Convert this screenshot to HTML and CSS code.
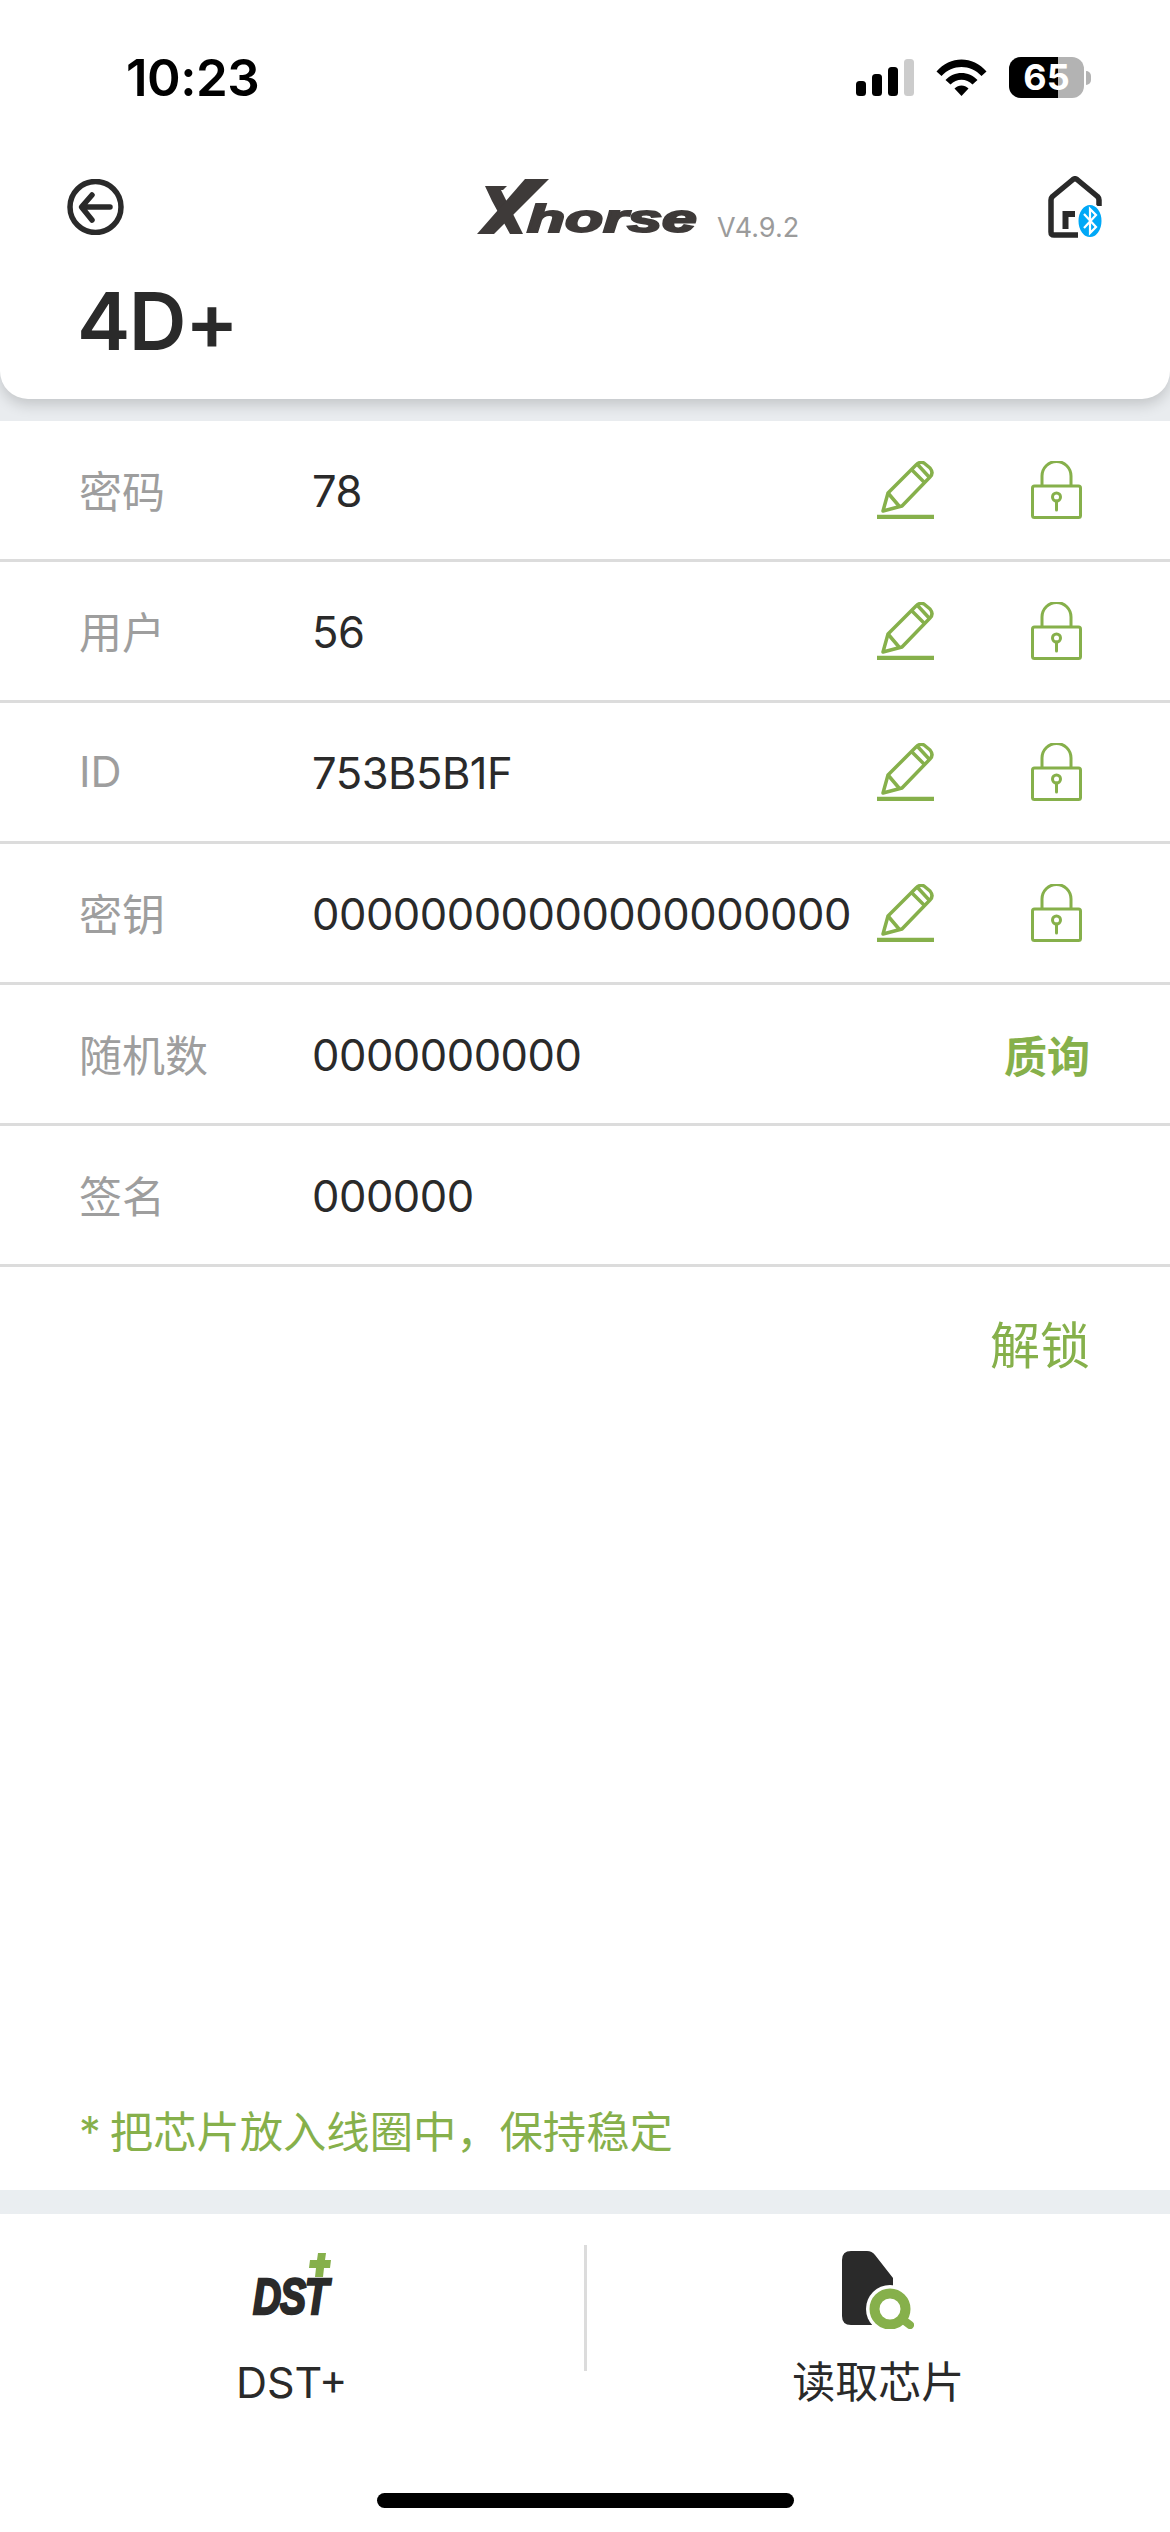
FILE: index.html
```html
<!DOCTYPE html>
<html lang="en">
<head>
    <meta charset="UTF-8">
    <meta name="viewport" content="width=device-width, initial-scale=1.0">
    <title>4D+</title>
    <link rel="stylesheet" href="styles.css">
</head>
<body>
<div class="page">

    <div class="top">
        <div class="header">
            <div class="status-bar">
                <span class="time">10:23</span>
                <div class="status-icons">
                    <svg class="signal" width="58" height="37" viewBox="0 0 58 37">
                        <rect x="0" y="22" width="10" height="15" rx="3.5" fill="#000"/>
                        <rect x="16" y="15" width="10" height="22" rx="3.5" fill="#000"/>
                        <rect x="32" y="8" width="10" height="29" rx="3.5" fill="#000"/>
                        <rect x="48" y="0" width="10" height="37" rx="3.5" fill="#ccc"/>
                    </svg>
                    <svg class="wifi" width="51" height="37" viewBox="0 0 51 37">
                        <path d="M0.5 12.5 C14 -3.5 37 -3.5 50.5 12.5 L45.5 17 C34.5 5 16.5 5 5.5 17 Z" fill="#000"/>
                        <path d="M9.5 21 C18 11.5 33 11.5 41.5 21 L36.5 25.5 C30.5 19 20.5 19 14.5 25.5 Z" fill="#000"/>
                        <path d="M18.5 29.5 C22.5 25.5 28.5 25.5 32.5 29.5 L25.5 37 Z" fill="#000"/>
                    </svg>
                    <div class="battery">
                        <div class="battery-body">
                            <span class="battery-fill"></span>
                            <span class="battery-num">65</span>
                        </div>
                        <span class="battery-nub"></span>
                    </div>
                </div>
            </div>

            <div class="nav">
                <svg class="back" width="57" height="56" viewBox="0 0 57 56">
                    <circle cx="28.5" cy="28" r="25.5" fill="none" stroke="#2a2a2a" stroke-width="5.5"/>
                    <path d="M43 28 H15 M25 16 L14.5 28 L25 41" fill="none" stroke="#2a2a2a" stroke-width="5.5" stroke-linecap="round" stroke-linejoin="round"/>
                </svg>
                <div class="brand">
                    <div class="logo">
                        <svg class="logo-x" width="74" height="55" viewBox="0 0 74 55">
                            <polygon points="8,7 30,7 26,11 24,11 46,55 33,55 15,22" fill="#3e3a39"/>
                            <polygon points="48,0 72,0 17,55 0,55" fill="#3e3a39"/>
                        </svg>
                        <span class="logo-text">horse</span>
                    </div>
                    <span class="version">V4.9.2</span>
                </div>
                <svg class="home" width="54" height="62" viewBox="0 0 54 62">
                    <path d="M30 59 H6 Q3 59 3 56 V24 Q3 22 4.5 20.5 L25 3.5 Q27 2 29 3.5 L49.5 20.5 Q51 22 51 24 V30" fill="none" stroke="#2a2a2a" stroke-width="5.5" stroke-linejoin="round"/>
                    <path d="M14.5 53 V35 H27 V41 H20.5 V53 Z" fill="#2a2a2a"/>
                    <ellipse cx="42" cy="45" rx="12.5" ry="17" fill="#00a8f7" stroke="#fff" stroke-width="2"/>
                    <path d="M36 38 L48 51 L42 57 V33 L48 39 L36 52" fill="none" stroke="#fff" stroke-width="2.2"/>
                </svg>
            </div>

            <h1 class="title">4D+</h1>
        </div>
    </div>

    <div class="list">
        <div class="row">
            <span class="label">密码</span>
            <span class="value">78</span>
            <svg class="pencil" viewBox="0 0 57 58"><use href="#pencil-shape"/></svg>
            <svg class="lock" viewBox="0 0 51 58"><use href="#lock-shape"/></svg>
        </div>
        <div class="row">
            <span class="label">用户</span>
            <span class="value">56</span>
            <svg class="pencil" viewBox="0 0 57 58"><use href="#pencil-shape"/></svg>
            <svg class="lock" viewBox="0 0 51 58"><use href="#lock-shape"/></svg>
        </div>
        <div class="row">
            <span class="label">ID</span>
            <span class="value">753B5B1F</span>
            <svg class="pencil" viewBox="0 0 57 58"><use href="#pencil-shape"/></svg>
            <svg class="lock" viewBox="0 0 51 58"><use href="#lock-shape"/></svg>
        </div>
        <div class="row">
            <span class="label">密钥</span>
            <span class="value">00000000000000000000</span>
            <svg class="pencil" viewBox="0 0 57 58"><use href="#pencil-shape"/></svg>
            <svg class="lock" viewBox="0 0 51 58"><use href="#lock-shape"/></svg>
        </div>
        <div class="row">
            <span class="label">随机数</span>
            <span class="value">0000000000</span>
            <span class="query">质询</span>
        </div>
        <div class="row">
            <span class="label">签名</span>
            <span class="value">000000</span>
        </div>
    </div>

    <div class="unlock-wrap"><span class="unlock">解锁</span></div>

    <p class="note">* 把芯片放入线圈中，保持稳定</p>

    <div class="band"></div>

    <div class="tabs">
        <div class="tab">
            <div class="tab-icon">
                <div class="dst">
                    <svg class="dst-plus" width="22" height="24" viewBox="0 0 22 24">
                        <polygon points="9,0 17,0 16,7 22,7 21,15 15,15 14,24 6,24 7,15 0,15 1,7 8,7" fill="#86b04b"/>
                    </svg>
                    <span class="dst-text">DST</span>
                </div>
            </div>
            <span class="tab-label">DST+</span>
        </div>
        <div class="tab-line"></div>
        <div class="tab">
            <div class="tab-icon">
                <svg class="chip-icon" width="72" height="78" viewBox="0 0 72 78">
                    <path d="M9 0 H25 Q30 0 33 4 L51 27 V74 H9 Q0 74 0 65 V9 Q0 0 9 0 Z" fill="#2a2a2a"/>
                    <circle cx="48" cy="58" r="24" fill="#fff"/>
                    <circle cx="48" cy="58" r="15.5" fill="none" stroke="#86b04b" stroke-width="10"/>
                    <path d="M60 68 L68 74" stroke="#86b04b" stroke-width="8" stroke-linecap="round"/>
                </svg>
            </div>
            <span class="tab-label">读取芯片</span>
        </div>
    </div>

    <div class="home-bar-wrap"><div class="home-bar"></div></div>
</div>

<svg class="defs" width="0" height="0">
    <defs>
        <g id="pencil-shape" fill="none" stroke="#86b04b" stroke-width="3.5">
            <path d="M6 50 L11 32 L39 4 Q43 0 47 2 L53 7 Q57 12 53 16 L25 45 Z" stroke-linejoin="round"/>
            <path d="M11 32 L22 45 M35 9 L48 22 M41 4 L53 17"/>
            <path d="M0 56 H57" stroke-width="4.5"/>
        </g>
        <g id="lock-shape" fill="none" stroke="#86b04b" stroke-width="3">
            <rect x="1.5" y="25" width="48" height="31.5" rx="2"/>
            <path d="M11 25 V15 A14.5 14.5 0 0 1 40 15 V25"/>
            <circle cx="25.5" cy="36" r="4"/>
            <path d="M25.5 40 V49" stroke-linecap="round"/>
        </g>
    </defs>
</svg>
</body>
</html>
```

FILE: styles.css
```css
* {
    box-sizing: border-box;
}
body {
    margin: 0;
    background: #fff;
    font-family: Inter, "Noto Sans CJK SC", sans-serif;
    color: #2a2a2a;
}
.page {
    width: 1170px;
    height: 2532px;
    display: flex;
    flex-direction: column;
    overflow: hidden;
}
.defs {
    display: block;
}

/* header */
.top {
    height: 421px;
    background: #e9ecef;
    overflow: hidden;
    flex-shrink: 0;
}
.header {
    height: 399px;
    background: #fff;
    border-radius: 0 0 28px 28px;
    box-shadow: 0 6px 14px rgba(0, 0, 0, 0.16);
}
.status-bar {
    height: 176px;
    display: flex;
    justify-content: space-between;
    padding: 50px 79px 0 126px;
}
.time {
    font-size: 51px;
    font-weight: 600;
    line-height: 56px;
    color: #000;
    letter-spacing: -0.5px;
}
.status-icons {
    display: flex;
    gap: 22px;
    height: 48px;
    padding-top: 9px;
}
.battery {
    display: flex;
    align-items: center;
    margin-top: -2px;
    height: 41px;
}
.battery-body {
    position: relative;
    width: 75px;
    height: 41px;
    border-radius: 12px;
    background: #b3b3b3;
    text-align: center;
}
.battery-fill {
    position: absolute;
    left: 0;
    top: 0;
    bottom: 0;
    width: 49px;
    background: #000;
    border-radius: 12px 0 0 12px;
}
.battery-num {
    position: relative;
    display: block;
    font-size: 36px;
    font-weight: 700;
    line-height: 41px;
    color: #fff;
}
.battery-nub {
    width: 5px;
    height: 14px;
    margin-left: 2px;
    background: #b3b3b3;
    border-radius: 0 7px 7px 0;
}
.nav {
    display: grid;
    grid-template-columns: 57px 1fr 54px;
    align-items: start;
    height: 100px;
    padding: 3px 68px 0 67px;
}
.home {
    margin-top: -3px;
}
.brand {
    display: flex;
    align-items: flex-end;
    gap: 23px;
    padding-left: 353px;
}
.logo {
    display: flex;
    align-items: flex-end;
    width: 217px;
    height: 55px;
}
.logo-x {
    flex-shrink: 0;
}
.logo-text {
    font-family: "Liberation Sans", sans-serif;
    font-size: 38px;
    font-weight: 700;
    font-style: italic;
    line-height: 30px;
    color: #3e3a39;
    margin-left: -24px;
    -webkit-text-stroke: 2px #3e3a39;
    display: inline-block;
    transform: scaleX(1.64);
    transform-origin: left bottom;
}
.version {
    font-size: 27px;
    line-height: 32px;
    color: #9b9b9b;
    margin-bottom: -10px;
}
.title {
    margin: 0;
    padding-left: 77px;
    font-size: 80px;
    font-weight: 600;
    letter-spacing: -1.5px;
    line-height: 90px;
    color: #2a2a2a;
}

/* rows */
.row {
    display: flex;
    align-items: center;
    height: 141px;
    border-bottom: 3px solid #dcdcdc;
    padding: 0 88px 0 79px;
    font-size: 43px;
}
.label {
    width: 233px;
    flex-shrink: 0;
    padding-bottom: 2px;
    color: #9e9e9e;
}
.value {
    flex: 1;
    white-space: nowrap;
    font-size: 43.5px;
    letter-spacing: -0.5px;
    padding-top: 2px;
    color: #2a2a2a;
}
.pencil {
    width: 57px;
    height: 58px;
    margin-right: 97px;
    flex-shrink: 0;
}
.lock {
    width: 51px;
    height: 58px;
    flex-shrink: 0;
}
.query {
    margin-right: -8px;
    color: #86b04b;
    font-weight: 700;
    font-size: 43px;
}
.unlock-wrap {
    display: flex;
    justify-content: flex-end;
    padding: 46px 80px 0 0;
}
.unlock {
    font-size: 50px;
    color: #86b04b;
    line-height: 66px;
}
.note {
    margin: auto 0 0;
    padding: 0 0 29px 79px;
    font-size: 43.3px;
    word-spacing: -3px;
    line-height: 58px;
    color: #86b04b;
}
.band {
    height: 24px;
    background: #eaeef1;
    flex-shrink: 0;
}

/* bottom tabs */
.tabs {
    display: flex;
    height: 279px;
    padding-top: 31px;
    flex-shrink: 0;
}
.tab {
    flex: 1;
    display: flex;
    flex-direction: column;
    align-items: center;
}
.tab-line {
    width: 3px;
    height: 126px;
    background: #dcdcdc;
    flex-shrink: 0;
}
.tab-icon {
    height: 86px;
    display: flex;
    justify-content: center;
    margin-bottom: 23px;
}
.chip-icon {
    margin-top: 6px;
}
.dst {
    position: relative;
    width: 78px;
    height: 61px;
    margin-top: 8px;
}
.dst-plus {
    position: absolute;
    right: 0;
    top: 0;
}
.dst-text {
    position: absolute;
    left: 0;
    bottom: -8px;
    font-family: "Liberation Sans", sans-serif;
    font-size: 50px;
    font-weight: 700;
    font-style: italic;
    letter-spacing: -1.5px;
    line-height: 50px;
    color: #2a2a2a;
    -webkit-text-stroke: 2.5px #2a2a2a;
    transform: scaleX(0.78);
    transform-origin: left bottom;
}
.tab-label {
    font-size: 43px;
    line-height: 56px;
    color: #2a2a2a;
}
.home-bar-wrap {
    flex: 0 0 auto;
    display: flex;
    justify-content: center;
    height: 39px;
}
.home-bar {
    width: 417px;
    height: 15px;
    border-radius: 8px;
    background: #000;
}
```
